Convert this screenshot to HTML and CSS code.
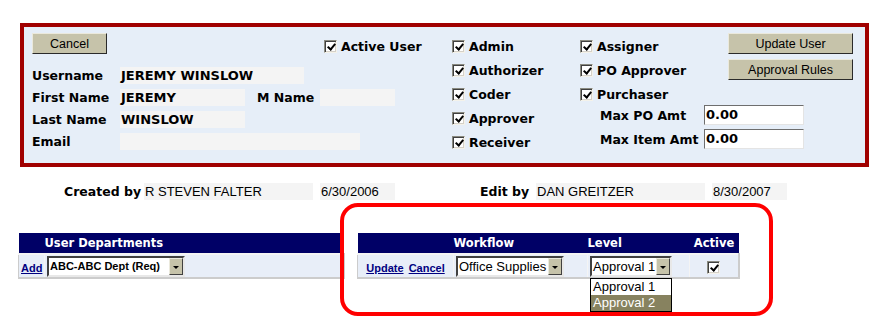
FILE: index.html
```html
<!DOCTYPE html>
<html lang="en">
<head>
    <meta charset="UTF-8">
    <title>Edit User</title>
    <link rel="stylesheet" href="styles.css">
</head>
<body>
    <div class="page">
        <div class="user-panel">
            <div class="identity">
                <div class="top-row">
                    <button class="btn btn-small">Cancel</button>
                    <span class="check active-user"><span class="box checked"></span>Active User</span>
                </div>
                <div class="field-row first">
                    <span class="field-label">Username</span>
                    <span class="value w-user">JEREMY WINSLOW</span>
                </div>
                <div class="field-row">
                    <span class="field-label">First Name</span>
                    <span class="value w-name">JEREMY</span>
                    <span class="field-label mname">M Name</span>
                    <span class="value w-mname"></span>
                </div>
                <div class="field-row">
                    <span class="field-label">Last Name</span>
                    <span class="value w-name">WINSLOW</span>
                </div>
                <div class="field-row">
                    <span class="field-label">Email</span>
                    <span class="value w-email"></span>
                </div>
            </div>

            <div class="roles">
                <div class="check"><span class="box checked"></span>Admin</div>
                <div class="check"><span class="box checked"></span>Authorizer</div>
                <div class="check"><span class="box checked"></span>Coder</div>
                <div class="check"><span class="box checked"></span>Approver</div>
                <div class="check"><span class="box checked"></span>Receiver</div>
            </div>

            <div class="roles roles-wide">
                <div class="check"><span class="box checked"></span>Assigner</div>
                <div class="check"><span class="box checked"></span>PO Approver</div>
                <div class="check"><span class="box checked"></span>Purchaser</div>
                <div class="amount-row first">
                    <span class="amount-label">Max PO Amt</span>
                    <span class="amount">0.00</span>
                </div>
                <div class="amount-row">
                    <span class="amount-label">Max Item Amt</span>
                    <span class="amount">0.00</span>
                </div>
            </div>

            <div class="actions">
                <button class="btn">Update User</button>
                <button class="btn">Approval Rules</button>
            </div>
        </div>

        <div class="audit">
            <span class="audit-label">Created by</span>
            <span class="audit-value w-who">R STEVEN FALTER</span>
            <span class="audit-value w-date">6/30/2006</span>
            <span class="audit-label edit">Edit by</span>
            <span class="audit-value w-who">DAN GREITZER</span>
            <span class="audit-value w-date">8/30/2007</span>
        </div>

        <div class="grids">
            <table class="grid dept">
                <tr>
                    <th class="c-add"></th>
                    <th>User Departments</th>
                </tr>
                <tr>
                    <td class="c-add link-cell"><a href="#">Add</a></td>
                    <td>
                        <span class="select bold w-dept"><span class="select-text">ABC-ABC Dept (Req)</span><span class="arrow"></span></span>
                    </td>
                </tr>
            </table>

            <div class="workflow-wrap">
                <table class="grid workflow">
                    <tr>
                        <th class="c-links"></th>
                        <th class="c-flow">Workflow</th>
                        <th class="c-level">Level</th>
                        <th class="c-active center">Active</th>
                    </tr>
                    <tr>
                        <td class="link-cell"><a href="#">Update</a> <a href="#">Cancel</a></td>
                        <td>
                            <span class="select w-flow"><span class="select-text">Office Supplies</span><span class="arrow"></span></span>
                        </td>
                        <td>
                            <span class="level-pick">
                                <span class="select w-level"><span class="select-text">Approval 1</span><span class="arrow"></span></span>
                                <span class="options">
                                    <span class="option">Approval 1</span>
                                    <span class="option selected">Approval 2</span>
                                </span>
                            </span>
                        </td>
                        <td class="center"><span class="box checked"></span></td>
                    </tr>
                </table>
                <div class="callout"></div>
            </div>
        </div>
    </div>
</body>
</html>
```

FILE: styles.css
```css
html,
body {
    height: 100%;
}

body {
    margin: 0;
    background: #ffffff;
    color: #000000;
    font-family: 'DejaVu Sans', Verdana, sans-serif;
}

.page {
    min-height: 317px;
    box-sizing: border-box;
    padding: 23px 0 0 20px;
}

/* top panel */

.user-panel {
    display: flex;
    width: 849px;
    height: 144px;
    box-sizing: border-box;
    padding: 6px 12px 0 8px;
    border: 4px solid #a00000;
    background: #e6eef8;
}

.identity {
    flex: none;
    width: 420px;
}

.top-row {
    display: flex;
    align-items: flex-start;
}

.btn {
    width: 125px;
    height: 21px;
    padding: 0;
    border: 1px solid;
    border-color: #ebe9dc #2a2a2a #2a2a2a #ebe9dc;
    background: #c6c3aa;
    color: #000000;
    font-family: 'Liberation Sans', Arial, sans-serif;
    font-size: 12.5px;
}

.btn-small {
    width: 75px;
}

.active-user {
    margin-left: 217px;
    margin-top: 6px;
}

.check {
    display: flex;
    align-items: center;
    gap: 4px;
    height: 24px;
    font-size: 12.5px;
    font-weight: bold;
    white-space: nowrap;
}

.active-user.check {
    height: 14px;
}

.box {
    position: relative;
    display: inline-block;
    flex: none;
    width: 13px;
    height: 13px;
    box-sizing: border-box;
    border: 1px solid;
    border-color: #8a8a80 #f4f2ea #f4f2ea #8a8a80;
    background: #ffffff;
    box-shadow: inset 1px 1px #404040, inset -1px -1px #d4d0c8;
    vertical-align: middle;
}

.box.checked::after {
    content: '';
    position: absolute;
    left: 4px;
    top: 1px;
    width: 3px;
    height: 6px;
    border: solid #000000;
    border-width: 0 2px 2px 0;
    transform: rotate(40deg);
}

.field-row {
    display: flex;
    align-items: center;
    height: 17px;
    margin-top: 5px;
}

.field-row.first {
    margin-top: 13px;
}

.field-label {
    flex: none;
    width: 88px;
    font-size: 12.5px;
    font-weight: bold;
}

.field-label.mname {
    width: 63px;
    margin-left: 12px;
}

.value {
    flex: none;
    height: 17px;
    box-sizing: border-box;
    padding-left: 1px;
    background: #f4f4f4;
    font-size: 13px;
    font-weight: bold;
    line-height: 18px;
    white-space: nowrap;
}

.w-user { width: 184px; }
.w-name { width: 125px; }
.w-mname { width: 75px; }
.w-email { width: 240px; }

.roles {
    flex: none;
    width: 128px;
    margin-top: 1px;
}

.roles-wide {
    width: 148px;
}

.amount-row {
    display: flex;
    align-items: center;
    height: 20px;
    margin-top: 4px;
    white-space: nowrap;
}

.amount-row.first {
    margin-top: -1px;
}

.amount-label {
    flex: none;
    width: 124px;
    box-sizing: border-box;
    padding-left: 20px;
    font-size: 12.5px;
    font-weight: bold;
}

.amount {
    flex: none;
    width: 100px;
    height: 20px;
    box-sizing: border-box;
    padding-left: 1px;
    border: 1px solid;
    border-color: #6e6e6e #e4e4e4 #e4e4e4 #6e6e6e;
    background: #ffffff;
    font-size: 13px;
    font-weight: bold;
    line-height: 18px;
}

.actions {
    display: flex;
    flex-direction: column;
    gap: 5px;
    flex: none;
}

/* created / edited */

.audit {
    display: flex;
    align-items: center;
    height: 17px;
    margin: 16px 0 0 44px;
}

.audit-label {
    flex: none;
    width: 80px;
    font-size: 12.5px;
    font-weight: bold;
}

.audit-label.edit {
    width: 56px;
    margin-left: 85px;
}

.audit-value {
    flex: none;
    height: 17px;
    box-sizing: border-box;
    padding-left: 1px;
    background: #f4f4f4;
    font-family: 'Liberation Sans', Arial, sans-serif;
    font-size: 13px;
    line-height: 18px;
}

.w-who { width: 169px; }
.w-date { width: 75px; margin-left: 7px; }

/* grids */

.grids {
    display: flex;
    align-items: flex-start;
    gap: 12px;
    margin: 33px 0 0 -2px;
}

.grid {
    border-collapse: collapse;
    table-layout: fixed;
}

.grid th {
    height: 20px;
    padding: 0;
    background: #000066;
    color: #ffffff;
    font-size: 11.5px;
    font-weight: bold;
    text-align: left;
}

.grid td {
    height: 22px;
    padding: 0 2px;
    border-top: 2px solid #f4f4f4;
    border-bottom: 2px solid #cccccc;
    border-left: 1px solid #f4f4f4;
    background: #e8eef8;
}

.grid td:first-child {
    border-left: 1px solid #cccccc;
}

.grid td:last-child {
    border-right: 2px solid #cccccc;
}

.grid .center {
    text-align: center;
}

.dept {
    width: 327px;
}

.dept .c-add {
    width: 26px;
}

.workflow {
    width: 381px;
}

.c-links { width: 96px; }
.c-flow { width: 134px; }
.c-level { width: 102px; }
.c-active { width: 49px; }

.link-cell {
    text-align: center;
    white-space: nowrap;
}

.link-cell a {
    color: #000080;
    font-family: 'Liberation Sans', Arial, sans-serif;
    font-size: 11px;
    font-weight: bold;
}

.select {
    display: inline-flex;
    align-items: stretch;
    height: 21px;
    box-sizing: border-box;
    border: 2px solid;
    border-color: #404040 #e8e8e8 #e8e8e8 #404040;
    background: #ffffff;
    font-family: 'Liberation Sans', Arial, sans-serif;
    font-size: 13px;
    vertical-align: middle;
}

.select.bold {
    font-size: 11px;
    font-weight: bold;
}

.select-text {
    flex: 1;
    padding-left: 1px;
    line-height: 17px;
    white-space: nowrap;
    overflow: hidden;
}

.arrow {
    position: relative;
    flex: none;
    width: 14px;
    box-sizing: border-box;
    border: 1px solid;
    border-color: #ebe9dc #404040 #404040 #ebe9dc;
    background: #c6c3aa;
}

.arrow::after {
    content: '';
    position: absolute;
    left: 3px;
    top: 7px;
    border-left: 3px solid transparent;
    border-right: 3px solid transparent;
    border-top: 3px solid #000000;
}

.w-dept { width: 138px; }
.w-flow { width: 108px; }
.w-level { width: 82px; }

.workflow-wrap {
    position: relative;
}

.level-pick {
    position: relative;
    display: inline-block;
    vertical-align: middle;
}

.options {
    position: absolute;
    left: 0;
    top: 22px;
    z-index: 2;
    width: 82px;
    box-sizing: border-box;
    border: 1px solid #000000;
    background: #ffffff;
    font-family: 'Liberation Sans', Arial, sans-serif;
    font-size: 13px;
}

.option {
    display: block;
    height: 16px;
    padding-left: 2px;
    line-height: 16px;
    white-space: nowrap;
}

.option.selected {
    background: #87825f;
    color: #ffffff;
}

/* red hand-drawn marker round the workflow grid */
.callout {
    position: absolute;
    left: -17px;
    top: -30px;
    width: 433px;
    height: 113px;
    box-sizing: border-box;
    border: 4px solid #ff0000;
    border-radius: 18px;
    pointer-events: none;
}
```
